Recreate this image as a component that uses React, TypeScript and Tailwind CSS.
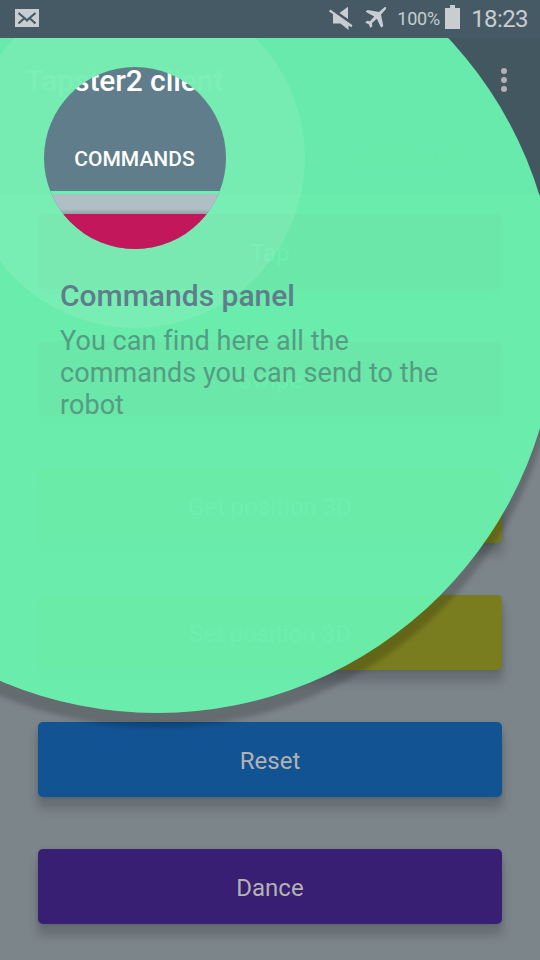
import React from "react";

const font = "font-[Roboto,sans-serif]";

type Command = { label: string; color: string };

const commands: Command[] = [
  { label: "Tap", color: "bg-[#88103f]" },
  { label: "Swipe", color: "bg-[#88103f]" },
  { label: "Get position 3D", color: "bg-[#7a7d1f]" },
  { label: "Set position 3D", color: "bg-[#7a7d1f]" },
  { label: "Reset", color: "bg-[#125393]" },
  { label: "Dance", color: "bg-[#391f74]" },
];

function StatusBar() {
  return (
    <header className="relative z-20 flex h-[38px] items-center bg-[#465a65] pl-[15px] pr-[12px] text-[#c8cdd1]">
      <svg className="-mt-[2px]" width="24" height="18" viewBox="0 0 24 18">
        <rect width="24" height="18" fill="#c8cdd1" />
        <path d="M3.5 4 L10 9.5 L12 11.5 L14 9.5 L20.5 4 M3.5 14.5 L9 9.5 M20.5 14.5 L15 9.5" fill="none" stroke="#465a65" strokeWidth="2.2" />
      </svg>
      <svg className="-mt-[2px] ml-auto" width="24" height="24" viewBox="0 0 24 24">
        <path d="M10.5 7 L19 .7 V13 Z M1.2 3.5 L23.5 19.3 L22.3 21.3 L19.5 19.5 V24 L11.5 17.5 H4 V8 L0 5.5 Z" fill="#c8cdd1" />
      </svg>
      <svg className="-mt-[3px] ml-[11px]" width="24" height="24" viewBox="0 0 24 24">
        <path d="M20.5 1.2 C22.2 .7 22.6 1.8 21.8 3.2 L17 8.5 L19.3 20 L17.2 21.8 L12.8 12.8 L8 17 L8.3 20.3 L6.4 21.9 L4.8 18.2 L1.3 16.7 L3 14.8 L6 15.3 L10.2 10.5 L1.6 5.8 L3.5 4 L15 6 Z" fill="#c8cdd1" />
      </svg>
      <span className="ml-[9px] w-[43px] whitespace-nowrap text-[18px] leading-[24px] tracking-[-0.2px]">100%</span>
      <svg className="ml-[5px] -mt-[4px]" width="15" height="24" viewBox="0 0 15 24">
        <path d="M5 0 h5 v3 h5 v21 H0 V3 h5 z" fill="#c8cdd1" />
      </svg>
      <span className="ml-[11px] text-[24px] leading-[38px] tracking-[-0.6px]">18:23</span>
    </header>
  );
}

function SpotlightOverlay() {
  return (
    <div className="absolute inset-0 z-10 overflow-hidden">
      <svg className="absolute inset-0" width="540" height="960" viewBox="0 0 540 960">
        <defs>
          <filter id="soft" x="-10%" y="-10%" width="120%" height="120%">
            <feGaussianBlur stdDeviation="2.8" />
          </filter>
          <mask id="outside">
            <rect width="540" height="960" fill="#fff" />
            <ellipse cx="157" cy="312.5" rx="400" ry="400.5" fill="#000" />
          </mask>
          <clipPath id="content">
            <rect y="194" width="540" height="766" />
          </clipPath>
        </defs>
        <g mask="url(#outside)" clipPath="url(#content)">
          <circle cx="157" cy="325.5" r="402" fill="#000" opacity=".19" filter="url(#soft)" />
        </g>
        <ellipse cx="157" cy="312.5" rx="400" ry="400.5" fill="#69f0ae" opacity=".96" />
        <circle cx="135" cy="158" r="170" fill="#fff" opacity=".1" />
      </svg>
      <section className="absolute left-[60px] top-[278px] w-[400px]">
        <h2 className="text-[30px] font-medium leading-[36px] text-[#607d8b]">Commands panel</h2>
        <p className="mt-[11px] text-[27px] leading-[32px] tracking-[0.07px] text-[#549c82]">
          You can find here all the
          <br />
          commands you can send to the
          <br />
          robot
        </p>
      </section>
      <div className="absolute left-[44px] top-[67px] flex size-[182px] flex-col overflow-hidden rounded-full bg-[#607d8b]">
        <span className="-ml-[19px] -mt-[4px] whitespace-nowrap text-[30px] font-medium leading-[36px] tracking-[-0.1px] text-white">Tapster2 client</span>
        <span className="-ml-[1px] mt-[48px] text-center text-[21px] font-medium leading-[24px] text-white">COMMANDS</span>
        <div className="mt-[20px] h-[3px] bg-[#69f0ae]" />
        <div className="h-[20px] bg-gradient-to-b from-[#b0bec5] from-75% to-[#939fa5]" />
        <div className="flex-1 bg-[#c2185b]" />
      </div>
    </div>
  );
}

export default function App() {
  return (
    <main className={`${font} relative flex h-[960px] w-[540px] flex-col overflow-hidden bg-[#7c858a]`}>
      <StatusBar />
      <div className="flex h-[156px] flex-col bg-[#435761]">
        <div className="flex h-[84px] items-center justify-between pl-[25px] pr-[33px] text-[#b2b2b2]">
          <h1 className="text-[30px] font-medium tracking-[-0.1px]">Tapster2 client</h1>
          <svg width="6" height="24" viewBox="0 0 6 24">
            <circle cx="3" cy="3" r="3" fill="#b2b2b2" />
            <circle cx="3" cy="12" r="3" fill="#b2b2b2" />
            <circle cx="3" cy="21" r="3" fill="#b2b2b2" />
          </svg>
        </div>
        <nav className="grid h-[72px] grid-cols-2 items-center text-center text-[21px] font-medium">
          <span className="text-[#b2b2b2]">COMMANDS</span>
          <span className="text-[#2f4049]">ASSISTANT</span>
        </nav>
      </div>
      <div className="flex flex-col gap-[52px] px-[38px] pt-[20px]">
        {commands.map((c) => (
          <button
            key={c.label}
            className={`${c.color} h-[75px] rounded-[5px] pt-[2px] text-[24px] text-[#b2b2b2] shadow-[0_11px_10px_1px_rgba(0,0,0,0.17),0_1px_4px_rgba(0,0,0,0.12)]`}
          >
            {c.label}
          </button>
        ))}
      </div>
      <SpotlightOverlay />
    </main>
  );
}
